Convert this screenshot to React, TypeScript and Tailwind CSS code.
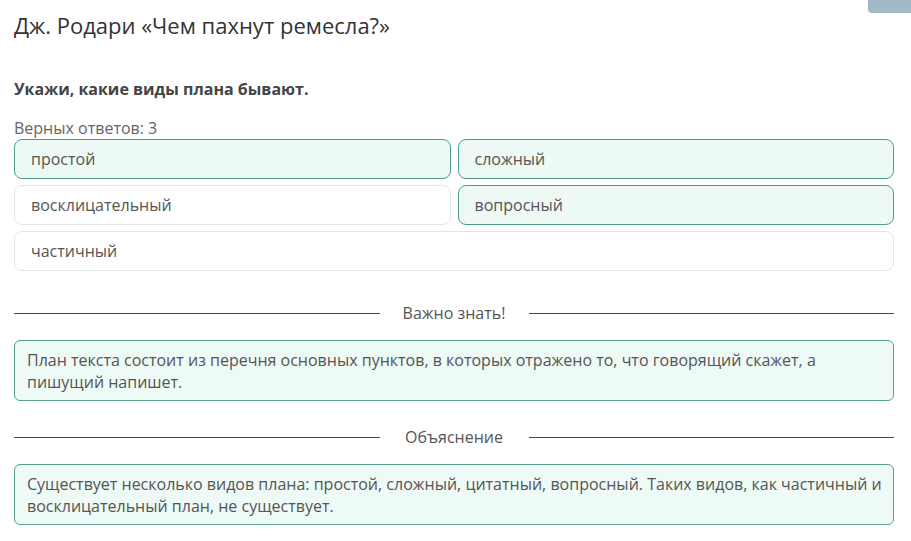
const options = [
  { text: "простой", picked: true, wide: false },
  { text: "сложный", picked: true, wide: false },
  { text: "восклицательный", picked: false, wide: false },
  { text: "вопросный", picked: true, wide: false },
  { text: "частичный", picked: false, wide: true },
];

function Divider({ label }: { label: string }) {
  return (
    <div className="flex items-center">
      <div className="flex-1 border-t border-[#4a4a4a]" />
      <span className="w-[149px] text-center text-[16px] leading-[24px] text-[#555]">{label}</span>
      <div className="flex-1 border-t border-[#4a4a4a]" />
    </div>
  );
}

function Note({ children }: { children: React.ReactNode }) {
  return (
    <div className="rounded-md border border-[#5a9e92] bg-[#eefaf5] pl-3 pr-1 pt-[8px] pb-[7px] text-[16px] leading-[22px] text-[#555]">
      {children}
    </div>
  );
}

export default function App() {
  return (
    <div className="relative h-[541px] w-[911px] overflow-hidden bg-white font-['Open_Sans',sans-serif]">
      <div className="absolute right-0 top-0 h-[13px] w-[43px] rounded-bl-[4px] bg-[#a3b9c7]" />
      <div className="pl-[14px] pr-[17px]">
        <h1 className="pt-[10px] text-[22px] leading-[30px] text-[#333]">Дж. Родари «Чем пахнут ремесла?»</h1>
        <p className="mt-[38px] text-[16px] font-bold leading-[22px] text-[#444]">Укажи, какие виды плана бывают.</p>
        <p className="mt-[18px] text-[16px] leading-[20px] text-[#666]">Верных ответов: 3</p>
        <div className="mt-[1px] grid grid-cols-2 gap-x-[7px] gap-y-[6px]">
          {options.map((o) => (
            <div
              key={o.text}
              className={
                "flex h-[40px] items-center rounded-[8px] border px-4 text-[16px] text-[#555] " +
                (o.wide ? "col-span-2 " : "") +
                (o.picked ? "border-[#4f9a8c] bg-[#ecf9f4]" : "border-[#e6e6e6] bg-white")
              }
            >
              {o.text}
            </div>
          ))}
        </div>
        <div className="mt-[30px]">
          <Divider label="Важно знать!" />
        </div>
        <div className="mt-[15px]">
          <Note>
            План текста состоит из перечня основных пунктов, в которых отражено то, что говорящий скажет, а
            <br />
            пишущий напишет.
          </Note>
        </div>
        <div className="mt-[24px]">
          <Divider label="Объяснение" />
        </div>
        <div className="mt-[15px]">
          <Note>
            Существует несколько видов плана: простой, сложный, цитатный, вопросный. Таких видов, как частичный и
            <br />
            восклицательный план, не существует.
          </Note>
        </div>
      </div>
    </div>
  );
}
